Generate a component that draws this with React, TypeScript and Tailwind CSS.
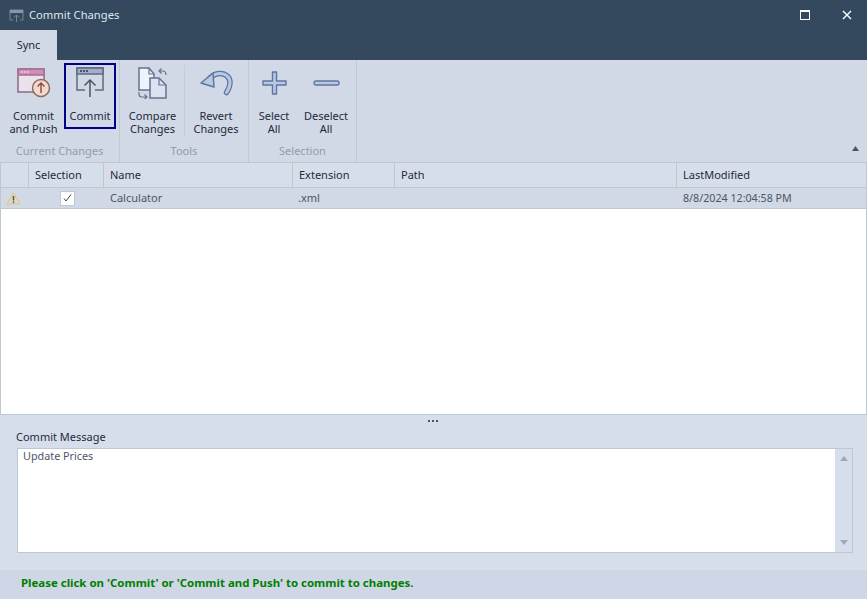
import React from "react";

const font = { fontFamily: '"Noto Sans", "Open Sans", sans-serif' };

const RibbonButton = ({ icon, lines, w, active }: { icon: React.ReactNode; lines: string[]; w: string; active?: boolean }) => (
  <div className={`${w} h-[66px] flex flex-col items-center shrink-0 ${active ? "border-2 border-[#00008b]" : "border-2 border-transparent"}`}>
    <div className="h-[44px] pb-[9px] w-full flex items-center justify-center shrink-0">{icon}</div>
    <div className="text-center text-[11px] leading-[13px] text-[#1e2a3a] whitespace-nowrap">
      {lines.map((l) => (
        <div key={l}>{l}</div>
      ))}
    </div>
  </div>
);

const RibbonGroup = ({ label, w, children }: { label: string; w: string; children: React.ReactNode }) => (
  <div className={`${w} h-full flex flex-col border-r border-[#bfcad3] shrink-0`}>
    <div className="flex h-[83px] pt-[3px]">{children}</div>
    <div className="text-center text-[11px] leading-[13px] pt-[1px] text-[#8f9db2]">{label}</div>
  </div>
);

const PushIcon = () => (
  <svg width="34" height="30" viewBox="0 0 34 30" fill="none">
    <rect x="1" y="1" width="26" height="23" fill="#e9e3ec" stroke="#8c6a85" strokeWidth="1.5" />
    <rect x="1" y="1" width="26" height="6" fill="#cd8fb6" stroke="#a56f94" strokeWidth="1.5" />
    <circle cx="5" cy="4" r="0.8" fill="#fff" /><circle cx="8" cy="4" r="0.8" fill="#fff" /><circle cx="11" cy="4" r="0.8" fill="#fff" />
    <circle cx="24" cy="20" r="8.500" fill="#f3d9cd" stroke="#8c6a60" strokeWidth="1.5" />
    <path d="M24 25V15M20.500 18.500L24 15l3.500 3.500" stroke="#8c4a3a" strokeWidth="1.4" />
  </svg>
);

const CommitIcon = () => (
  <svg width="28" height="31" viewBox="0 0 28 31" fill="none">
    <path d="M9 23H1V1H27V23H19" stroke="#5e6a80" strokeWidth="1.5" />
    <rect x="1" y="1" width="26" height="6" fill="#a4aec8" stroke="#5e6a80" strokeWidth="1.5" />
    <circle cx="5" cy="4" r="0.9" fill="#1e2a3a" /><circle cx="8" cy="4" r="0.9" fill="#1e2a3a" /><circle cx="11" cy="4" r="0.9" fill="#1e2a3a" />
    <path d="M14 30V13M8.500 18.500L14 13l5.500 5.500" stroke="#4a5568" strokeWidth="1.5" />
  </svg>
);

const CompareIcon = () => (
  <svg width="29" height="32" viewBox="0 0 29 32" fill="none">
    <path d="M1 1H11l5 6v16H1Z" fill="#eef3fc" stroke="#66738f" strokeWidth="1.5" />
    <path d="M11 1v6h5" stroke="#66738f" strokeWidth="1.2" />
    <path d="M12 11h9l7 7v13H12Z" fill="#dbe3f2" stroke="#66738f" strokeWidth="1.5" />
    <path d="M21 11v7h7" stroke="#66738f" strokeWidth="1.2" />
    <path d="M21 4h4c2 0 3 1 3 4M23.500 1.500L21 4l2.500 2.500" stroke="#66738f" strokeWidth="1.2" />
    <path d="M1 25v2c0 2 1 3 3 3h5M6.500 27.500L9 30l-2.500 2" stroke="#66738f" strokeWidth="1.2" />
  </svg>
);

const RevertIcon = () => (
  <svg width="33" height="26" viewBox="0 0 33 26" fill="none">
    <path d="M10 8c3-3 6-4.500 10-4.500 6 0 10 4 10 9 0 4-1.500 7-3.500 10" stroke="#5f74a0" strokeWidth="5.500" strokeLinecap="round" />
    <path d="M10 8c3-3 6-4.500 10-4.500 6 0 10 4 10 9 0 4-1.500 7-3.500 10" stroke="#b9c8e4" strokeWidth="3" strokeLinecap="round" />
    <path d="M1 13L13 3l1 14Z" fill="#b9c8e4" stroke="#5f74a0" strokeWidth="1.5" strokeLinejoin="round" />
  </svg>
);

const PlusIcon = () => (
  <svg width="25" height="24" viewBox="0 0 25 24" fill="none">
    <path d="M10.500 1h4v9h9.500v4H14.500v9h-4v-9H1v-4h9.500Z" fill="#b9c8e4" stroke="#5f74a0" strokeWidth="1.4" strokeLinejoin="round" />
  </svg>
);

const MinusIcon = () => (
  <svg width="27" height="6" viewBox="0 0 27 6" fill="none">
    <rect x="1" y="1" width="25" height="4" rx="2" fill="#b9c8e4" stroke="#5f74a0" strokeWidth="1.4" />
  </svg>
);

const columns = [
  { label: "", w: "w-[28px]" },
  { label: "Selection", w: "w-[75px]" },
  { label: "Name", w: "w-[189px]" },
  { label: "Extension", w: "w-[102px]" },
  { label: "Path", w: "w-[282px]" },
  { label: "LastModified", w: "flex-1" },
];

export default function App() {
  return (
    <div className="w-[867px] h-[599px] overflow-hidden flex flex-col bg-[#d1d8e6]" style={font}>
      {/* Title bar */}
      <div className="h-[30px] bg-[#34495e] flex items-center shrink-0">
        <svg className="ml-[9px]" width="15" height="15" viewBox="0 0 15 15" fill="none">
          <path d="M4 12H1V2h13v10h-3" stroke="#78848f" strokeWidth="1" />
          <rect x="1" y="2" width="13" height="3" fill="#8c96a3" />
          <path d="M7.500 14V7M5 9.500L7.500 7 10 9.500" stroke="#78848f" strokeWidth="1" />
        </svg>
        <div className="ml-[5px] text-[11.2px] text-[#dfe7ee]">Commit Changes</div>
        <div className="ml-auto flex items-center">
          <div className="w-[10px] h-[10px] border border-white border-t-2 mr-[32px]"></div>
          <svg className="mr-[15px]" width="10" height="10" viewBox="0 0 10 10">
            <path d="M1 1l8 8M9 1l-8 8" stroke="#fff" strokeWidth="1.4" />
          </svg>
        </div>
      </div>

      {/* Tabs */}
      <div className="h-[30px] bg-[#34495e] shrink-0">
        <div className="w-[57px] h-full bg-[#d1d8e6] flex items-center justify-center text-[11px] text-[#1e2a3a]">Sync</div>
      </div>

      {/* Ribbon */}
      <div className="relative h-[102px] flex shrink-0 bg-[#d1d8e6]">
        <RibbonGroup label="Current Changes" w="w-[120px]">
          <div className="flex pl-[5px] gap-[2px]">
            <RibbonButton icon={<PushIcon />} lines={["Commit", "and Push"]} w="w-[57px]" />
            <RibbonButton icon={<CommitIcon />} lines={["Commit"]} w="w-[52px]" active />
          </div>
        </RibbonGroup>
        <RibbonGroup label="Tools" w="w-[129px]">
          <div className="flex pl-[1px]">
            <RibbonButton icon={<CompareIcon />} lines={["Compare", "Changes"]} w="w-[63px]" />
            <div className="w-px h-[72px] mt-[2px] bg-[#c3ccd8] shrink-0"></div>
            <RibbonButton icon={<RevertIcon />} lines={["Revert", "Changes"]} w="w-[62px]" />
          </div>
        </RibbonGroup>
        <RibbonGroup label="Selection" w="w-[108px]">
          <div className="flex pl-[2px] gap-[2px]">
            <RibbonButton icon={<PlusIcon />} lines={["Select", "All"]} w="w-[46px]" />
            <RibbonButton icon={<MinusIcon />} lines={["Deselect", "All"]} w="w-[54px]" />
          </div>
        </RibbonGroup>
        <svg className="absolute right-[8px] bottom-[11px]" width="7" height="5" viewBox="0 0 7 5">
          <path d="M3.500 0L7 5H0Z" fill="#4a5568" />
        </svg>
      </div>

      {/* Grid */}
      <div className="h-[253px] border border-[#bcc9ce] bg-white flex flex-col shrink-0">
        <div className="h-[25px] flex bg-[#d7deeb] border-b border-[#bcc9ce] shrink-0">
          {columns.map((c, i) => (
            <div
              key={i}
              className={`${c.w} h-full flex items-center pl-[6px] text-[11px] text-[#1e2a3a] ${i < columns.length - 1 ? "border-r border-[#bcc9ce]" : ""}`}
            >
              {c.label}
            </div>
          ))}
        </div>
        <div className="h-[21px] flex items-center bg-[#d1d8e6] border-b border-[#bcc9ce] text-[11px] text-[#4b5668] shrink-0">
          <div className="w-[28px] flex items-center pl-[5px]">
            <svg width="15" height="13" viewBox="0 0 15 13" fill="none">
              <path d="M7.500 1L14 12H1Z" fill="#dcdacb" stroke="#e6c274" strokeWidth="1" />
              <path d="M7.500 4v4.500M7.500 9.500v1.500" stroke="#555" strokeWidth="1.500" />
            </svg>
          </div>
          <div className="w-[75px] flex justify-center pl-px">
            <div className="w-[15px] h-[15px] bg-white border border-[#bcc9ce] flex items-center justify-center">
              <svg width="9" height="8" viewBox="0 0 9 8" fill="none">
                <path d="M1 4.500L3 7l5-6.500" stroke="#444" strokeWidth="1" />
              </svg>
            </div>
          </div>
          <div className="w-[189px] pl-[6px]">Calculator</div>
          <div className="w-[102px] pl-[5px]">.xml</div>
          <div className="w-[282px]"></div>
          <div className="flex-1 pl-[6px] text-[10.7px] whitespace-nowrap">8/8/2024 12:04:58 PM</div>
        </div>
      </div>

      {/* Splitter */}
      <div className="h-[11px] flex items-center justify-center gap-[2px] pr-[2px] shrink-0 bg-[#d7deeb]">
        <div className="w-[2px] h-[2px] bg-[#4a5568]"></div>
        <div className="w-[2px] h-[2px] bg-[#4a5568]"></div>
        <div className="w-[2px] h-[2px] bg-[#4a5568]"></div>
      </div>

      {/* Commit message */}
      <div className="h-[143px] bg-[#d7deeb] pl-[17px] shrink-0 flex flex-col">
        <div className="text-[11px] leading-[16px] h-[22px] pt-[3px] -ml-px text-[#1e2a3a]">Commit Message</div>
        <div className="w-[836px] h-[105px] border border-[#bcc9ce] bg-white flex">
          <div className="flex-1 pl-[5px] text-[10.8px] leading-[14px] text-[#4b5668]">Update Prices</div>
          <div className="w-[17px] h-full bg-[#d7deeb] flex flex-col items-center justify-between py-[7px]">
            <svg width="8" height="5" viewBox="0 0 8 5"><path d="M4 0l4 5H0Z" fill="#a0a8b8" /></svg>
            <svg width="8" height="5" viewBox="0 0 8 5"><path d="M4 5L8 0H0Z" fill="#a0a8b8" /></svg>
          </div>
        </div>
      </div>

      {/* Status bar */}
      <div className="flex-1 flex items-center pl-[21px] pb-[3px] bg-[#cfd6e5] border-t border-[#dcdfe6] text-[11.45px] font-bold text-[#008000]">
        Please click on 'Commit' or 'Commit and Push' to commit to changes.
      </div>
    </div>
  );
}
